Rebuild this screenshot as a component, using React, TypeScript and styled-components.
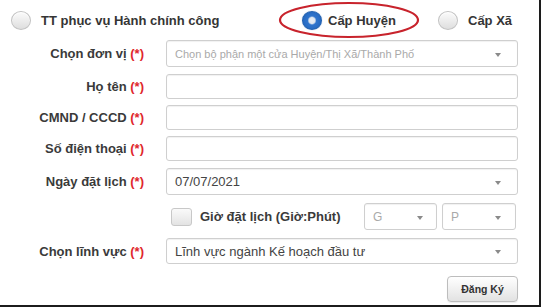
import React from "react";
import styled, { createGlobalStyle } from "styled-components";

const Global = createGlobalStyle`
  html, body { margin: 0; padding: 0; background: #fff; }
  body { font-family: "Liberation Sans", Arial, sans-serif; }
`;

const Frame = styled.div`
  position: relative;
  box-sizing: border-box;
  width: 541px;
  height: 307px;
  border-right: 2px solid #1c1c1c;
  border-bottom: 2px solid #1c1c1c;
  background: #fff;
  overflow: hidden;
`;

const RadioBar = styled.div`
  display: grid;
  grid-template-columns: 291px 136px auto;
  align-items: center;
  height: 40px;
  padding-left: 11px;
  box-sizing: border-box;
`;

const RadioOption = styled.label<{ $gap: number }>`
  display: flex;
  align-items: center;
  gap: ${(p) => p.$gap}px;
  font-size: 13px;
  font-weight: bold;
  color: #353535;
  white-space: nowrap;
`;

const RadioCircle = styled.span<{ $on?: boolean }>`
  position: relative;
  box-sizing: border-box;
  width: 20px;
  height: 19px;
  border-radius: 50%;
  border: 1px solid ${(p) => (p.$on ? "#1f5fae" : "#c2c2c2")};
  background: ${(p) =>
    p.$on
      ? "radial-gradient(circle at 50% 50%, #e9eef5 0, #dfe6ef 3px, #2f74cc 4.5px, #1f62bb 100%)"
      : "linear-gradient(#fbfbfb, #dedede)"};
  box-shadow: ${(p) => (p.$on ? "0 0 1px rgba(30,90,180,.6)" : "inset 0 1px 1px #fff")};
`;

const Ellipse = styled.svg`
  position: absolute;
  left: 278px;
  top: 1px;
  pointer-events: none;
`;

const Row = styled.div<{ $top: number; $h: number }>`
  display: grid;
  grid-template-columns: 144px 352px;
  column-gap: 22px;
  align-items: center;
  margin-top: ${(p) => p.$top}px;
  height: ${(p) => p.$h}px;
`;

const Label = styled.div`
  text-align: right;
  font-size: 13px;
  font-weight: bold;
  color: #3a3a3a;
  white-space: nowrap;
`;

const Req = styled.span`
  color: #e0262c;
`;

const Box = styled.div<{ $w?: number }>`
  position: relative;
  box-sizing: border-box;
  height: 100%;
  ${(p) => (p.$w ? `width: ${p.$w}px; flex: none;` : "width: 100%;")}
  border: 1px solid #cfcfcf;
  border-radius: 3px;
  background: #fff;
  box-shadow: inset 0 1px 1px rgba(0, 0, 0, 0.06);
  display: flex;
  align-items: center;
  padding-left: 8px;
  font-size: 13px;
  color: #444;
  white-space: nowrap;
`;

const Placeholder = styled.span<{ $size?: number }>`
  color: #a9a9a9;
  font-size: ${(p) => p.$size ?? 11}px;
`;

const Caret = styled.span<{ $right: number }>`
  position: absolute;
  right: ${(p) => p.$right}px;
  top: 50%;
  margin-top: -1px;
  width: 0;
  height: 0;
  border-left: 3.5px solid transparent;
  border-right: 3.5px solid transparent;
  border-top: 4px solid #8a8a8a;
`;

const TimeLine = styled.div`
  display: flex;
  align-items: center;
  height: 100%;
`;

const Check = styled.span`
  box-sizing: border-box;
  width: 21px;
  height: 18px;
  margin-left: 5px;
  border: 1px solid #c8c8c8;
  border-radius: 3px;
  background: linear-gradient(#fafafa, #e3e3e3);
`;

const TimeLabel = styled.span`
  flex: 1;
  margin-left: 8px;
  font-size: 13px;
  font-weight: bold;
  color: #3a3a3a;
  white-space: nowrap;
`;

const Selects = styled.div`
  display: flex;
  gap: 5px;
  height: 100%;
  margin-right: 2px;
`;

const ButtonCell = styled.div`
  display: flex;
  justify-content: flex-end;
  height: 100%;
`;

const Button = styled.button`
  box-sizing: border-box;
  width: 71px;
  height: 100%;
  border: 1px solid #bdbdbd;
  border-radius: 4px;
  background: linear-gradient(#ffffff, #e2e2e2);
  box-shadow: 0 1px 1px rgba(0, 0, 0, 0.08);
  font-family: "Liberation Sans", Arial, sans-serif;
  font-size: 10.5px;
  font-weight: bold;
  color: #333;
  padding: 0;
`;

const Empty = styled.div``;

const Field = ({ label, children, top, h }: { label: React.ReactNode; children: React.ReactNode; top: number; h: number }) => (
  <Row $top={top} $h={h}>
    <Label>{label}</Label>
    {children}
  </Row>
);

export default function App() {
  return (
    <>
      <Global />
      <Frame>
        <RadioBar>
          <RadioOption $gap={10}>
            <RadioCircle />
            TT phục vụ Hành chính công
          </RadioOption>
          <RadioOption $gap={6}>
            <RadioCircle $on />
            Cấp Huyện
          </RadioOption>
          <RadioOption $gap={10}>
            <RadioCircle />
            Cấp Xã
          </RadioOption>
        </RadioBar>
        <Ellipse width="142" height="38" viewBox="0 0 142 38">
          <ellipse cx="71" cy="19" rx="69" ry="17" fill="none" stroke="#c8232c" strokeWidth="2.2" />
        </Ellipse>

        <Field top={0} h={27} label={<>Chọn đơn vị <Req>(*)</Req></>}>
          <Box>
            <Placeholder>Chọn bộ phận một cửa Huyện/Thị Xã/Thành Phố</Placeholder>
            <Caret $right={16} />
          </Box>
        </Field>
        <Field top={7} h={25} label={<>Họ tên <Req>(*)</Req></>}>
          <Box />
        </Field>
        <Field top={6} h={25} label={<>CMND / CCCD <Req>(*)</Req></>}>
          <Box />
        </Field>
        <Field top={6} h={25} label={<>Số điện thoại <Req>(*)</Req></>}>
          <Box />
        </Field>
        <Field top={7} h={27} label={<>Ngày đặt lịch <Req>(*)</Req></>}>
          <Box>
            07/07/2021
            <Caret $right={16} />
          </Box>
        </Field>
        <Row $top={8} $h={27}>
          <Empty />
          <TimeLine>
            <Check />
            <TimeLabel>Giờ đặt lịch (Giờ:Phút)</TimeLabel>
            <Selects>
              <Box $w={73}>
                <Placeholder $size={12}>G</Placeholder>
                <Caret $right={13} />
              </Box>
              <Box $w={74}>
                <Placeholder $size={12}>P</Placeholder>
                <Caret $right={14} />
              </Box>
            </Selects>
          </TimeLine>
        </Row>
        <Field top={8} h={26} label={<>Chọn lĩnh vực <Req>(*)</Req></>}>
          <Box>
            Lĩnh vực ngành Kế hoạch đầu tư
            <Caret $right={16} />
          </Box>
        </Field>
        <Row $top={12} $h={26}>
          <Empty />
          <ButtonCell>
            <Button>Đăng Ký</Button>
          </ButtonCell>
        </Row>
      </Frame>
    </>
  );
}
